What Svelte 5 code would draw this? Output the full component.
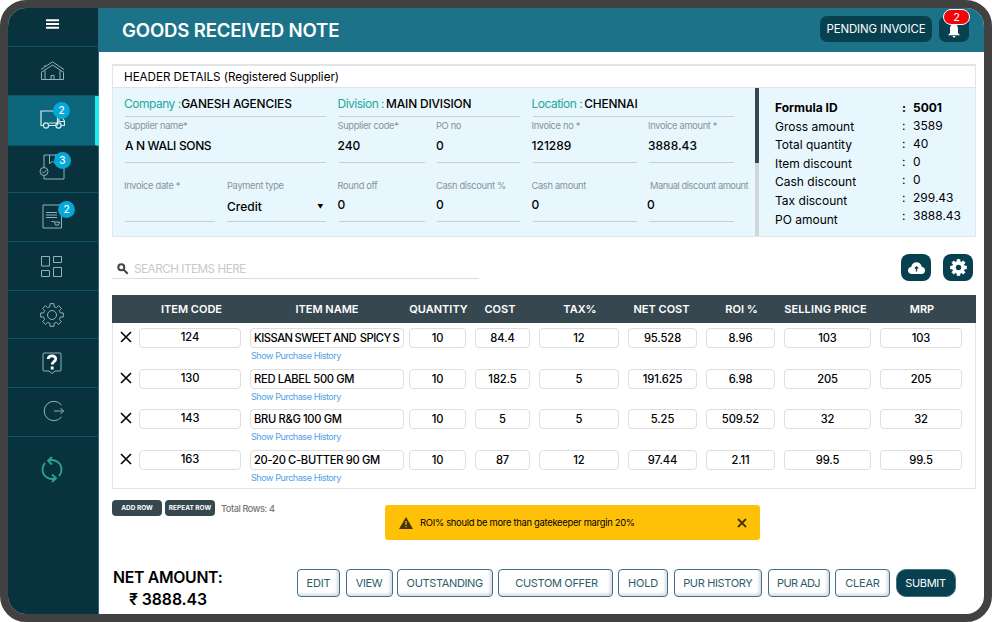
<script>
	const summary = [
		["Formula ID", "5001"],
		["Gross amount", "3589"],
		["Total quantity", "40"],
		["Item discount", "0"],
		["Cash discount", "0"],
		["Tax discount", "299.43"],
		["PO amount", "3888.43"],
	];

	const columns = [
		"ITEM CODE",
		"ITEM NAME",
		"QUANTITY",
		"COST",
		"TAX%",
		"NET COST",
		"ROI %",
		"SELLING PRICE",
		"MRP",
	];

	const rows = [
		{ name: "KISSAN SWEET AND  SPICY S", code: "124", values: ["10", "84.4", "12", "95.528", "8.96", "103", "103"] },
		{ name: "RED LABEL 500 GM", code: "130", values: ["10", "182.5", "5", "191.625", "6.98", "205", "205"] },
		{ name: "BRU R&G 100 GM", code: "143", values: ["10", "5", "5", "5.25", "509.52", "32", "32"] },
		{ name: "20-20 C-BUTTER 90 GM", code: "163", values: ["10", "87", "12", "97.44", "2.11", "99.5", "99.5"] },
	];

	// eight teeth around 0,0: inner and outer radius with the angles in degrees
	const gear = Array.from({ length: 8 }, (_, i) =>
		[[-14, 8.6], [-10, 11.5], [10, 11.5], [14, 8.6]].map(([offset, r]) => {
			const a = ((i * 45 + offset) * Math.PI) / 180;
			return `${(r * Math.cos(a)).toFixed(2)},${(r * Math.sin(a)).toFixed(2)}`;
		}).join(" ")
	).join(" ");
</script>

<div class="device">
	<nav>
		<div class="item menu">
			<svg width="13" height="10" viewBox="0 0 13 10"><path d="M0 1.300h13M0 5h13M0 8.700h13" stroke="#fff" stroke-width="2" /></svg>
		</div>
		<div class="item home">
			<svg width="25" height="20" viewBox="0 0 25 20"><path d="M1 8.500 12.500.8 24 8.500M1 11.500 12.500 4 24 11.500M1.500 11.500V18.500h22v-7M5 9.500v9M20 9.500v9M11 18.500v-4h3v4M5 4v2" /></svg>
		</div>
		<div class="item active">
			<svg width="25" height="20" viewBox="0 0 25 20"><path d="M3 16.500H1V2h16.500v14.500M9 16.500h7M9 14h8M17.500 8H22l2.500 4v4.500H21M19 9.500v3h5" /><circle cx="6" cy="16.500" r="2.600" /><circle cx="18.500" cy="16.500" r="2.600" /></svg>
			<b class="count">2</b>
		</div>
		<div class="item approve">
			<svg width="26" height="26" viewBox="0 0 26 26"><path d="M5 13V1h20v24H5v-3.500M10.500 1v8.500l3-2 3 2V1" /><circle cx="5" cy="17.500" r="4" /><path d="m3 17.500 1.600 1.600 2.800-3" /></svg>
			<b class="count">3</b>
		</div>
		<div class="item report">
			<svg width="21" height="25" viewBox="0 0 21 25"><path d="M1 1h18.500v23H1zM4 8.500h11M4 11h11M4 13.500h11M9.500 17.500h2.500l1.500 3.500h3l1.200-3H12.500" /></svg>
			<b class="count">2</b>
		</div>
		<div class="item modules">
			<svg width="23" height="23" viewBox="0 0 23 23"><path d="M1.500 1.500h8v9.500h-8zM13.500 1.500h8v6h-8zM1.500 15.500h8v6h-8zM13.500 12.500h8v9h-8z" /></svg>
		</div>
		<div class="item gear">
			<svg width="24" height="24" viewBox="-12 -12 24 24"><polygon points={gear} /><circle r="4.500" /></svg>
		</div>
		<div class="item">
			<svg width="20" height="22" viewBox="0 0 20 22"><path d="M2 1h16q1 0 1 1v16q0 1-1 1h-5l-3 2.500L7 19H2q-1 0-1-1V2q0-1 1-1z" /><path class="mark" d="M6.200 7q.2-3.200 3.800-3.200T13.700 7c0 2.700-3.500 2.600-3.500 5.500M10.200 14.600v2.800" /></svg>
		</div>
		<div class="item">
			<svg class="exit" width="22" height="22" viewBox="0 0 22 22"><path d="M18.500 5A9.700 9.700 0 1 0 18.500 17M11 11h9.500M17.500 8l3 3-3 3" /></svg>
		</div>
		<div class="item sync">
			<svg width="22" height="27" viewBox="0 0 22 27"><path d="M7.500 4.500C14 2.500 20.500 7 20.500 13.500c0 3-1 5-2.500 6.500M11 1 7 4.700 11 8.500M14.500 22.500C8 24.500 1.500 20 1.500 13.500c0-3 1-5 2.500-6.500M11 18.500l4 3.800-4 3.700" /></svg>
		</div>
	</nav>

	<main>
		<header>
			<h1>GOODS RECEIVED NOTE</h1>
			<button class="pending">PENDING INVOICE</button>
			<button class="bell">
				<svg width="14" height="14" viewBox="0 0 14 14"><path d="M7 0C4 0 3 2.500 3 5v4l-2 2.200h12L11 9V5c0-2.500-1-5-4-5zM5.500 12h3q-.3 1.500-1.500 1.500T5.500 12z" /></svg>
				<b>2</b>
			</button>
		</header>

		<section class="details">
			<h2>HEADER DETAILS (Registered Supplier)</h2>
			<div class="body">
				<div class="fields">
					<div class="line wide top"><em>Company :</em><strong>GANESH AGENCIES</strong></div>
					<div class="line wide top division"><em>Division :</em><strong>MAIN DIVISION</strong></div>
					<div class="line wide top end"><em>Location :</em><strong>CHENNAI</strong></div>

					<div class="line wide"><label>Supplier name*</label><span>A N WALI SONS</span></div>
					<div class="line"><label>Supplier code*</label><span>240</span></div>
					<div class="line"><label>PO no</label><span>0</span></div>
					<div class="line"><label>Invoice no *</label><span>121289</span></div>
					<div class="line end"><label>Invoice amount *</label><span>3888.43</span></div>

					<div class="line last"><label>Invoice date *</label></div>
					<div class="line last credit"><label>Payment type</label><span>Credit <i>▼</i></span></div>
					<div class="line last"><label>Round off</label><span>0</span></div>
					<div class="line last"><label>Cash discount %</label><span>0</span></div>
					<div class="line last"><label>Cash amount</label><span>0</span></div>
					<div class="line last end manual"><label>Manual discount amount</label><span>0</span></div>
				</div>
				<div class="scroll"><div class="thumb"></div></div>
				<div class="summary">
					<div class="names">
						{#each summary as [name]}<div>{name}</div>{/each}
					</div>
					<div class="amounts">
						{#each summary as [, amount]}<div><i>:</i>{amount}</div>{/each}
					</div>
				</div>
			</div>
		</section>

		<div class="tools">
			<div class="search">
				<svg width="12" height="12" viewBox="0 0 12 12"><circle cx="4.300" cy="4.300" r="3" /><path d="m6.700 6.700 4 4" /></svg>
				SEARCH ITEMS HERE
			</div>
			<button class="upload">
				<svg width="19" height="14" viewBox="0 0 19 14"><path d="M5 13C2.500 13 1 11.500 1 9.500 1 7.600 2.300 6.200 4.200 6 4.700 3.200 6.800 1.300 9.500 1.300c2.800 0 4.800 1.800 5.300 4.500 2 .3 3.200 1.700 3.200 3.600 0 2.200-1.500 3.600-3.700 3.600z" fill="#fff" /><path d="M9.500 10.500V6M7.800 7.500l1.700-1.700 1.700 1.700" stroke="#07404f" stroke-width="1.200" fill="none" /></svg>
			</button>
			<button>
				<svg width="17" height="17" viewBox="-12 -12 24 24"><polygon points={gear} fill="#fff" stroke="#fff" stroke-linejoin="round" /><circle r="3.800" fill="#07404f" /></svg>
			</button>
		</div>

		<section class="table">
			<div class="row head">
				<div></div>
				{#each columns as column}<div>{column}</div>{/each}
			</div>
			{#each rows as row}
				<div class="row">
					<svg width="12" height="12" viewBox="0 0 12 12"><path d="m1 1 10 10M11 1 1 11" /></svg>
					<div class="cell code">{row.code}</div>
					<div class="name">
						<div class="cell" class:long={row.name.length > 22}>{row.name}</div>
						<a href="#history">Show Purchase History</a>
					</div>
					{#each row.values as value}<div class="cell">{value}</div>{/each}
				</div>
			{/each}
		</section>

		<div class="rowtools">
			<button>ADD ROW</button>
			<button>REPEAT ROW</button>
			<span>Total Rows: 4</span>
		</div>

		<div class="toast">
			<svg width="14" height="12" viewBox="0 0 14 12"><path d="M7 0l7 12H0z" fill="#453508" /><path d="M7 4v4M7 9v1.300" stroke="#ffc107" stroke-width="1.200" /></svg>
			<span>ROI% should be more than gatekeeper margin 20%</span>
			<svg width="10" height="10" viewBox="0 0 10 10"><path d="m1 1 8 8M9 1 1 9" stroke="#453508" stroke-width="1.800" /></svg>
		</div>

		<footer>
			<div class="net">NET AMOUNT:<br /><b>₹ 3888.43</b></div>
			<button class="edit">EDIT</button>
			<button class="view">VIEW</button>
			<button class="outstanding">OUTSTANDING</button>
			<button class="offer">CUSTOM OFFER</button>
			<button class="hold">HOLD</button>
			<button class="history">PUR HISTORY</button>
			<button class="adj">PUR ADJ</button>
			<button class="clear">CLEAR</button>
			<button class="submit">SUBMIT</button>
		</footer>
	</main>
</div>

<style>
	:global(body) {
		background: #fff;
		font-family: Inter, "Liberation Sans", sans-serif;
	}
	* {
		box-sizing: border-box;
	}
	h1,
	h2 {
		margin: 0;
	}
	button {
		border: 0;
		padding: 0;
		font: inherit;
		white-space: nowrap;
	}
	i,
	em {
		font-style: normal;
	}
	.device {
		display: flex;
		width: 992px;
		height: 622px;
		border: 8px solid #414141;
		border-radius: 26px;
		overflow: hidden;
		background: #fff;
	}

	/* sidebar */
	nav {
		width: 91px;
		background: #08333e;
		border-right: 1px solid #2c6674;
		flex: none;
	}
	.item {
		position: relative;
		display: flex;
		align-items: center;
		justify-content: center;
		height: 48.8px;
		border-bottom: 1px solid #0e5468;
		padding-right: 2px;
	}
	.item svg {
		fill: none;
		stroke: #8fb3bb;
		stroke-width: 1;
	}
	.menu {
		height: 39px;
		padding-bottom: 6px;
	}
	.home {
		height: 49px;
	}
	.item.active {
		height: 50px;
		background: #0b657b;
		border-right: 4px solid #1cecf5;
		margin-right: -1px;
		padding: 0 0 4px 2px;
	}
	.item.active svg {
		stroke: #d5eef3;
		stroke-width: 1.2;
	}
	.approve {
		height: 47px;
		padding-bottom: 4px;
	}
	.modules {
		padding: 2px 3px 0 0;
	}
	.gear {
		padding-top: 2px;
	}
	.mark {
		stroke: #fff;
		stroke-width: 2.8;
	}
	.exit {
		margin: -2px 0 0 4px;
	}
	.sync {
		height: 66px;
		border: 0;
	}
	.item.sync svg {
		stroke: #2ba595;
		stroke-width: 1.8;
	}
	.count {
		position: absolute;
		left: 45px;
		top: 6px;
		width: 17px;
		height: 17px;
		border-radius: 50%;
		background: #05a8d6;
		color: #fff;
		font-size: 10px;
		font-weight: 500;
		line-height: 17px;
		text-align: center;
	}
	.report .count {
		left: 50px;
		top: 8px;
	}
	.approve .count {
		left: 46px;
	}

	/* page */
	main {
		position: relative;
		width: 885px;
		padding-left: 13px;
	}
	header {
		display: flex;
		align-items: center;
		height: 44px;
		margin-left: -13px;
		padding: 0 15px 0 23px;
		background: #1c7389;
		color: #fff;
	}
	h1 {
		flex: 1;
		font-size: 18.6px;
		font-weight: 600;
		letter-spacing: -0.17px;
		line-height: 20px;
	}
	header button {
		position: relative;
		height: 26px;
		border-radius: 7px;
		background: #07404f;
		color: #fff;
	}
	.pending {
		width: 112px;
		margin: -2px 7px 0 0;
		font-size: 11.4px;
		letter-spacing: -0.1px;
	}
	.bell {
		width: 30px;
		margin-top: -2px;
	}
	.bell svg {
		display: block;
		margin: 3px auto 0;
		fill: #fff;
	}
	.bell b {
		position: absolute;
		top: -7px;
		left: 4px;
		width: 27px;
		height: 16px;
		border: 1px solid #fff;
		border-radius: 8px;
		background: #f00408;
		font-size: 11px;
		font-weight: 400;
		line-height: 14px;
	}
	.details {
		width: 864px;
		height: 173px;
		margin-top: 12px;
		border: 1px solid #dfe5e8;
		border-top-width: 2px;
	}
	h2 {
		height: 22px;
		padding-left: 11px;
		border-bottom: 1px solid #e0e4e6;
		font-size: 11.7px;
		font-weight: 400;
		letter-spacing: -0.06px;
		line-height: 23px;
	}
	.body {
		display: flex;
		height: 148px;
		background: #e8f7fe;
	}
	.fields {
		display: grid;
		grid-template-columns: 102px 111.5px 98.5px 95.5px 116.5px 107px;
		grid-template-rows: 29px 46px 73px;
		padding-left: 11px;
		width: 642px;
		flex: none;
	}
	.line {
		position: relative;
		white-space: nowrap;
	}
	.line::after {
		content: "";
		position: absolute;
		left: 1px;
		right: 11.5px;
		bottom: 0;
		height: 1px;
		background: #c9d0d4;
	}
	.line.last::after {
		bottom: 14px;
	}
	.line.end::after {
		right: 21px;
	}
	.line.wide {
		grid-column: span 2;
	}
	.top {
		line-height: 31px;
		font-size: 12px;
		letter-spacing: -0.5px;
	}
	.top em {
		color: #25a79a;
	}
	.top strong {
		font-size: 11.9px;
		font-weight: 500;
		letter-spacing: -0.15px;
		margin-left: 0.5px;
	}
	.division strong,
	.end strong {
		margin-left: 2px;
	}
	label {
		display: block;
		padding-top: 3px;
		height: 20px;
		color: #87939a;
		font-size: 9.3px;
		letter-spacing: -0.32px;
		line-height: 12px;
	}
	.line span {
		display: block;
		font-size: 12px;
		font-weight: 500;
		line-height: 18px;
	}
	.wide span {
		letter-spacing: -0.35px;
		padding-left: 1px;
	}
	.last label {
		padding-top: 17px;
		height: 33px;
	}
	.manual label {
		padding-left: 2px;
		letter-spacing: -0.45px;
	}
	.manual span {
		margin-left: -1px;
	}
	.credit span {
		display: flex;
		justify-content: space-between;
		padding: 2px 14px 0 1px;
	}
	.credit label {
		padding-left: 1px;
	}
	.credit i {
		font-size: 6px;
	}
	.scroll {
		width: 4px;
		flex: none;
		background: #d2d6d8;
	}
	.thumb {
		height: 75px;
		background: #37474f;
	}
	.summary {
		display: flex;
		flex: 1;
		padding: 11px 0 0 16px;
		font-size: 12px;
	}
	.names {
		width: 127px;
		line-height: 18.6px;
	}
	.amounts {
		line-height: 18px;
	}
	.names div:first-child,
	.amounts div:first-child {
		font-weight: 700;
	}
	.amounts i {
		display: inline-block;
		width: 11px;
	}

	.tools {
		display: flex;
		align-items: flex-start;
		gap: 12px;
		width: 861px;
		margin-top: 17px;
		height: 41px;
	}
	.search {
		display: flex;
		align-items: center;
		gap: 5px;
		width: 367px;
		height: 25px;
		margin-right: auto;
		padding: 5px 0 0 5px;
		border-bottom: 1px solid #dcdcdc;
		color: #c9c9c9;
		font-size: 11.7px;
		letter-spacing: -0.48px;
	}
	.search svg {
		fill: none;
		stroke: #444;
		stroke-width: 2;
	}
	.tools button {
		display: flex;
		align-items: center;
		justify-content: center;
		width: 30px;
		height: 27px;
		border-radius: 8px;
		background: #07404f;
	}

	/* items */
	.table {
		width: 864px;
		height: 194px;
		border: 1px solid #e4e4e4;
		border-top: 0;
	}
	.row {
		display: grid;
		grid-template-columns: 26px 111px 159px 66px 64px 89px 78px 78px 96px 82px;
		height: 40.5px;
		padding-top: 5px;
	}
	.row > svg {
		margin: 3px 0 0 7px;
		stroke: #000;
		stroke-width: 1.6;
	}
	.row.head {
		height: 28px;
		margin: 0 -1px;
		padding: 0 0 0 1px;
		background: #37474f;
		color: #fff;
		font-size: 11px;
		font-weight: 600;
		line-height: 28px;
	}
	.head div {
		display: flex;
		justify-content: center;
		white-space: nowrap;
		margin-right: 9px;
	}
	.head div:nth-child(2) {
		margin-right: 6px;
	}
	.head div:nth-child(3) {
		margin-right: 5px;
	}
	.head div:nth-child(4) {
		margin-right: 7px;
	}
	.head div:nth-child(5) {
		margin-right: 14px;
	}
	.head div:nth-child(6),
	.head div:nth-child(8) {
		margin-right: 7px;
	}
	.head div:nth-child(7) {
		margin-right: 11px;
	}
	.head div:nth-child(9) {
		margin-right: 13px;
		letter-spacing: 0.15px;
	}
	.head div:nth-child(10) {
		margin-right: -2px;
	}
	.cell {
		height: 20px;
		margin-right: 9px;
		border: 1px solid #dedede;
		border-radius: 4px;
		font-size: 11.2px;
		font-weight: 500;
		letter-spacing: -0.1px;
		line-height: 19px;
		text-align: center;
		white-space: pre;
	}
	.cell.code {
		line-height: 17px;
	}
	.cell:last-child {
		margin-right: 0;
	}
	.name .cell {
		margin-right: 5px;
		padding-left: 3px;
		letter-spacing: -0.3px;
		word-spacing: -0.2px;
		text-align: left;
	}
	.name .cell.long {
		letter-spacing: -0.5px;
		word-spacing: -0.6px;
	}
	.name a {
		display: block;
		padding-left: 1px;
		color: #4f9fe8;
		font-size: 9.1px;
		letter-spacing: -0.5px;
		word-spacing: 0.2px;
		line-height: 16px;
		text-decoration: none;
	}
	.rowtools {
		display: flex;
		align-items: center;
		gap: 3px;
		margin-top: 11px;
		height: 17px;
	}
	.rowtools button {
		width: 50px;
		height: 16px;
		margin-top: -1px;
		border-radius: 4px;
		background: #37474f;
		color: #fff;
		font-size: 6.5px;
		font-weight: 700;
	}
	.rowtools span {
		margin-left: 3px;
		color: #777;
		font-size: 9.2px;
		font-weight: 500;
		letter-spacing: -0.42px;
	}
	.toast {
		position: absolute;
		left: 286px;
		top: 497px;
		display: flex;
		align-items: center;
		width: 375px;
		height: 35px;
		padding: 0 13px 0 14px;
		border-radius: 3px;
		background: #ffc107;
		font-size: 9.4px;
	}
	.toast span {
		flex: 1;
		margin-left: 7px;
		letter-spacing: -0.28px;
	}
	footer {
		display: flex;
		align-items: flex-start;
		margin-top: 49px;
		padding-top: 3px;
	}
	.net {
		width: 185px;
		margin-top: -2px;
		padding-left: 1px;
		font-size: 15.8px;
		font-weight: 600;
		letter-spacing: -0.3px;
		line-height: 22px;
	}
	.net b {
		margin-left: 16px;
		font-weight: 600;
		letter-spacing: -0.05px;
	}
	footer button {
		height: 28px;
		margin-right: 5.5px;
		border: 1px solid #40708a;
		border-radius: 4px;
		background: #fff;
		box-shadow: inset -2px -2px 3px #d5dbdf;
		color: #2b5d69;
		font-size: 11px;
		letter-spacing: -0.35px;
	}
	.edit {
		width: 43px;
		letter-spacing: -0.1px;
	}
	.view {
		width: 47px;
		margin-right: 4.5px;
	}
	.outstanding {
		width: 95.5px;
		margin-right: 5px;
	}
	.offer {
		width: 115px;
		padding-left: 3px;
	}
	.hold {
		width: 50px;
		letter-spacing: -0.2px;
	}
	.history {
		width: 88.5px;
	}
	.adj {
		width: 62px;
		letter-spacing: -0.6px;
	}
	.clear {
		width: 55px;
		letter-spacing: -0.2px;
	}
	.submit {
		width: 60px;
		border-radius: 10px;
		background: #07404f;
		box-shadow: none;
		color: #fff;
	}
</style>
